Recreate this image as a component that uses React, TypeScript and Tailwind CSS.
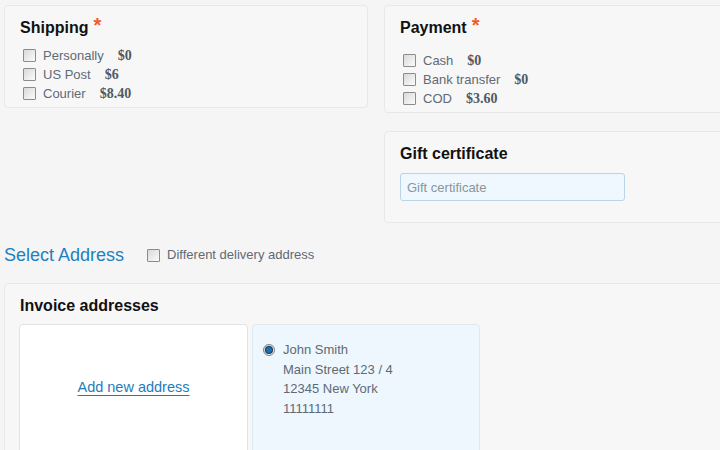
import React from "react";

const shipping = [
  { label: "Personally", price: "$0" },
  { label: "US Post", price: "$6" },
  { label: "Courier", price: "$8.40" },
];

const payment = [
  { label: "Cash", price: "$0" },
  { label: "Bank transfer", price: "$0" },
  { label: "COD", price: "$3.60" },
];

function Box() {
  return (
    <span className="ml-[3px] inline-block h-[13px] w-[13px] shrink-0 rounded-[1px] border border-[#8c8c8c] bg-gradient-to-br from-[#d9d9d9] to-[#fbfbfb]" />
  );
}

function Option({ label, price }: { label: string; price: string }) {
  return (
    <div className="flex h-[19px] items-center">
      <Box />
      <span className="ml-[7px] text-[13px] text-[#5e6a75]">{label}</span>
      <span className="ml-[14px] font-['Liberation_Serif',serif] text-[14px] font-bold text-[#4f5963]">
        {price}
      </span>
    </div>
  );
}

function Heading({ children, req }: { children: React.ReactNode; req?: boolean }) {
  return (
    <h3 className="flex h-[20px] items-center text-[16px] font-bold leading-[20px] text-[#111]">
      {children}
      {req && (
        <span className="relative -top-[3px] ml-[5px] text-[20px] font-bold leading-none text-[#f05a28]">
          *
        </span>
      )}
    </h3>
  );
}

export default function App() {
  return (
    <div className="h-[450px] w-[720px] overflow-hidden bg-[#f5f5f5] pl-[4px] pt-[5px] font-['Liberation_Sans',Arial,sans-serif]">
      <div className="grid w-[744px] grid-cols-[364px_364px] items-start gap-x-[16px]">
        {/* Shipping */}
        <div className="rounded-[4px] border border-[#e8e8e8] bg-[#f7f7f7] px-[15px] pb-[4px] pt-[12px]">
          <Heading req>Shipping</Heading>
          <div className="mt-[8px]">
            {shipping.map((o) => (
              <Option key={o.label} {...o} />
            ))}
          </div>
        </div>

        <div className="flex flex-col gap-[18px]">
          {/* Payment */}
          <div className="rounded-[4px] border border-[#e8e8e8] bg-[#f7f7f7] px-[15px] pb-[4px] pt-[12px]">
            <Heading req>Payment</Heading>
            <div className="mt-[13px]">
              {payment.map((o) => (
                <Option key={o.label} {...o} />
              ))}
            </div>
          </div>

          {/* Gift certificate */}
          <div className="rounded-[4px] border border-[#e8e8e8] bg-[#f7f7f7] px-[15px] pb-[21px] pt-[12px]">
            <Heading>Gift certificate</Heading>
            <input
              placeholder="Gift certificate"
              className="mt-[9px] h-[28px] w-[225px] rounded-[3px] border border-[#b9d4e6] bg-[#eef8fe] px-[6px] text-[13px] text-[#555] outline-none placeholder:text-[#8a959e]"
            />
          </div>
        </div>
      </div>

      {/* Select address */}
      <div className="mt-[20px] flex h-[24px] items-center">
        <span className="text-[18px] leading-[24px] text-[#1e80c0]">Select Address</span>
        <span className="ml-[20px] flex items-center">
          <Box />
          <span className="ml-[7px] text-[13px] text-[#5e6a75]">Different delivery address</span>
        </span>
      </div>

      {/* Invoice addresses */}
      <div className="mt-[16px] w-[743px] rounded-[4px] border border-[#e8e8e8] bg-[#f7f7f7] px-[15px] pt-[12px]">
        <Heading>Invoice addresses</Heading>
        <div className="-ml-px mt-[8px] flex gap-[4px]">
          <div className="flex h-[140px] w-[229px] items-center justify-center rounded-[4px] border border-[#e3e3e3] bg-white pb-[12px]">
            <a href="#" className="text-[14.5px] text-[#1f7bb9] underline underline-offset-[3px]">
              Add new address
            </a>
          </div>
          <div className="flex h-[140px] w-[228px] rounded-[4px] border border-[#dde8ef] bg-[#edf7fd] pl-[10px] pt-[15px]">
            <span className="mt-[4px] flex h-[12px] w-[12px] items-center justify-center rounded-full border border-[#808080] bg-gradient-to-br from-[#cfcfcf] to-[#fafafa]">
              <span className="h-[6px] w-[6px] rounded-full bg-[#1c6fb0] ring-1 ring-[#173a5a]" />
            </span>
            <div className="ml-[8px] text-[13px] leading-[19.5px] text-[#5e6a75]">
              <div>John Smith</div>
              <div>Main Street 123 / 4</div>
              <div>12345 New York</div>
              <div>11111111</div>
            </div>
          </div>
        </div>
      </div>
    </div>
  );
}
